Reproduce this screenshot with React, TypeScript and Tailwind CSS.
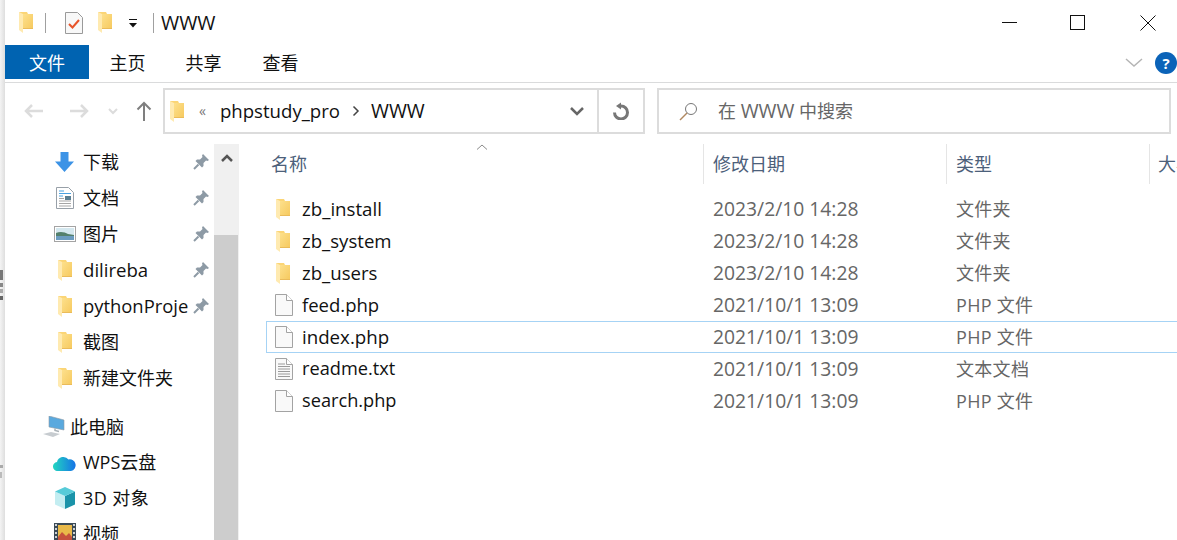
import React from "react";

const FONT = "font-['Open_Sans','Noto_Sans_CJK_SC',sans-serif]";

function Folder({ className = "" }: { className?: string }) {
  return (
    <svg width="14" height="21" viewBox="0 0 14 21" className={className}>
      <defs>
        <linearGradient id="fbody" x1="0" y1="0" x2="1" y2="1">
          <stop offset="0" stopColor="#fde08c" />
          <stop offset="1" stopColor="#f6c95e" />
        </linearGradient>
      </defs>
      <path d="M0 0h8l1 2h5v15H4z" fill="#fbd576" />
      <path d="M4 2h10v15H4z" fill="url(#fbody)" />
      <path d="M0 0l4 2v19L0 18z" fill="#ffeab0" />
      <path d="M4 16.500h10" stroke="#eabb5a" strokeWidth="1" />
    </svg>
  );
}

function Pin() {
  return (
    <svg width="16" height="16" viewBox="0 0 16 16">
      <path d="M10 0l6 6-1.500 1-1.500-.5L10.500 9v3L9 13.500 2.500 7 4 5.500h3L9.500 3 9 1.500z" fill="#8d9aa5" />
      <path d="M5.500 10.500L1 15" stroke="#8d9aa5" strokeWidth="2" />
    </svg>
  );
}

function FileIcon({ lines = false }: { lines?: boolean }) {
  return (
    <svg width="18" height="22" viewBox="0 0 18 22">
      <path d="M.5.500h11l6 6v15H.5z" fill="#f9f9f9" stroke="#a3a3a3" />
      <path d="M11.500.500v6h6" fill="#fff" stroke="#a3a3a3" />
      {lines && (
        <path d="M3 6h7M3 8.500h12M3 11h12M3 13.500h12M3 16h12M3 18.500h12" stroke="#9a9a9a" strokeWidth="1" />
      )}
    </svg>
  );
}

function SideIcon({ kind }: { kind: string }) {
  if (kind === "download")
    return (
      <svg width="19" height="20" viewBox="0 0 19 20">
        <path d="M5.500 0h8v9.500H19L9.500 20 0 9.500h5.500z" fill="#3c93e6" />
      </svg>
    );
  if (kind === "doc")
    return (
      <svg width="18" height="22" viewBox="0 0 18 22">
        <path d="M.5.500h12l5 5v16H.5z" fill="#fff" stroke="#98a0a8" />
        <path d="M3 4h5M3 6.500h12M3 9h4" stroke="#4ba3e3" strokeWidth="1" />
        <rect x="9" y="9" width="6" height="4" fill="#5a7f93" />
        <path d="M3 11.500h5M3 14h12M3 16.500h12M3 19h12" stroke="#a5a5a5" strokeWidth="1" />
      </svg>
    );
  if (kind === "pic")
    return (
      <svg width="22" height="16" viewBox="0 0 22 16">
        <rect x=".5" y=".5" width="21" height="15" fill="#fff" stroke="#a4a4a4" />
        <rect x="2" y="2" width="18" height="12" fill="#d5e8ef" />
        <path d="M2 7c4-2 9-1 12 1l6 1v5H2z" fill="#54806c" />
        <path d="M2 10h18v4H2z" fill="#6b9cc0" />
      </svg>
    );
  if (kind === "pc")
    return (
      <svg width="24" height="22" viewBox="0 0 24 22">
        <path d="M7 0l15 4v10L7 11z" fill="#5aa9de" stroke="#8d9aa5" strokeWidth=".6" />
        <path d="M13 12.500v2l4 1" stroke="#a9b1b7" strokeWidth="1.500" fill="none" />
        <path d="M1 18l8-2 9 2-7 3z" fill="#c7ccd0" />
      </svg>
    );
  if (kind === "cloud")
    return (
      <svg width="23" height="17" viewBox="0 0 23 17">
        <defs>
          <linearGradient id="cg" x1="0" y1="0" x2="1" y2="0">
            <stop offset="0" stopColor="#22d6c0" />
            <stop offset="1" stopColor="#1673e6" />
          </linearGradient>
        </defs>
        <path d="M5 17a4.500 4.500 0 0 1-1-9A6.500 6.500 0 0 1 15.500 5.500 5.700 5.700 0 0 1 18 17z" fill="url(#cg)" />
      </svg>
    );
  if (kind === "3d")
    return (
      <svg width="22" height="22" viewBox="0 0 22 22">
        <path d="M11 9l10-4.500v13L11 22z" fill="#1a93a9" />
        <path d="M11 9L1 4.500v13L11 22z" fill="#c3edf1" />
        <path d="M11 0l10 4.500L11 9 1 4.500z" fill="#56cbd8" />
      </svg>
    );
  return (
    <svg width="22" height="22" viewBox="0 0 22 22">
      <rect width="22" height="22" fill="#3b4a56" />
      <rect x="4" y="2" width="14" height="18" fill="#e9b949" />
      <path d="M4 14l4-5 4 4 3-3 3 4v6H4z" fill="#c6503d" />
      <path d="M1 2h2M1 6h2M1 10h2M1 14h2M1 18h2M19 2h2M19 6h2M19 10h2M19 14h2M19 18h2" stroke="#fff" strokeWidth="1.500" />
    </svg>
  );
}

function QuickItem({ icon, label, pin, labelClass = "" }: { icon: React.ReactNode; label: string; pin?: boolean; labelClass?: string }) {
  return (
    <div className="flex h-9 items-center pl-[45px]">
      <div className="flex w-[33px] shrink-0 items-center justify-center pr-[4px]">{icon}</div>
      <span className={`w-[110px] shrink-0 overflow-hidden whitespace-nowrap ${labelClass}`}>{label}</span>
      {pin && <Pin />}
    </div>
  );
}

const files = [
  { name: "zb_install", date: "2023/2/10 14:28", type: "文件夹", icon: "folder", size: "text-[18.7px]" },
  { name: "zb_system", date: "2023/2/10 14:28", type: "文件夹", icon: "folder", size: "text-[18.6px]" },
  { name: "zb_users", date: "2023/2/10 14:28", type: "文件夹", icon: "folder", size: "text-[18.6px]" },
  { name: "feed.php", date: "2021/10/1 13:09", type: "PHP 文件", icon: "file", size: "text-[18.5px]" },
  { name: "index.php", date: "2021/10/1 13:09", type: "PHP 文件", icon: "file", selected: true, size: "text-[18.7px]" },
  { name: "readme.txt", date: "2021/10/1 13:09", type: "文本文档", icon: "text", size: "text-[18.2px]" },
  { name: "search.php", date: "2021/10/1 13:09", type: "PHP 文件", icon: "file", size: "text-[18.2px]" },
];

export default function App() {
  return (
    <div className={`${FONT} flex h-[540px] w-[1177px] overflow-hidden bg-white text-[18px] text-[#111]`}>
      <div className="relative w-[5px] shrink-0 bg-linear-to-r from-[#f4f4f4] to-[#dedede]">
        <div className="absolute left-0 top-[270px] h-[10px] w-[3px] bg-[#777]" />
        <div className="absolute left-0 top-[283px] h-[4px] w-[3px] bg-[#888]" />
        <div className="absolute left-0 top-[289px] h-[4px] w-[3px] bg-[#aaa]" />
        <div className="absolute left-0 top-[296px] h-[4px] w-[3px] bg-[#666]" />
        <div className="absolute left-0 top-[465px] h-[3px] w-[3px] bg-[#aaa]" />
        <div className="absolute left-0 top-[472px] h-[6px] w-[2px] bg-[#bbb]" />
      </div>
      <div className="flex min-w-0 flex-1 flex-col">
        {/* title bar */}
        <div className="flex h-[45px] shrink-0 items-center">
          <Folder className="ml-[14px]" />
          <div className="ml-[12px] h-[20px] w-px bg-[#a0a0a0]" />
          <svg width="18" height="22" viewBox="0 0 18 22" className="ml-[19px]">
            <path d="M.5.500h12l5 5v16H.5z" fill="#f8f8f8" stroke="#9a9a9a" />
            <path d="M4 12l3.500 3.500L14 8" stroke="#e8542a" strokeWidth="2" fill="none" />
          </svg>
          <Folder className="ml-[15px]" />
          <svg width="10" height="10" viewBox="0 0 10 10" className="ml-[16px] mt-[2px]">
            <path d="M1 .5h8" stroke="#111" />
            <path d="M1 4h8L5 8.500z" fill="#111" />
          </svg>
          <div className="ml-[15px] h-[20px] w-px bg-[#a0a0a0]" />
          <span className="ml-[7px] text-[19.7px]">WWW</span>
          <div className="ml-auto flex items-center">
            <div className="mr-[53px] h-px w-[15px] bg-[#111]" />
            <div className="mr-[55px] h-[15px] w-[15px] border border-[#111]" />
            <svg width="16" height="16" viewBox="0 0 16 16" className="mr-[21px]">
              <path d="M.5.500l15 15M15.500.500l-15 15" stroke="#111" />
            </svg>
          </div>
        </div>
        {/* ribbon tabs */}
        <div className="flex h-[38px] shrink-0 items-start border-b border-[#dadbdc]">
          <div className="flex h-[34px] w-[84px] items-center justify-center bg-[#0063b1] pt-[2px] text-white">文件</div>
          <div className="flex h-[34px] w-[77px] items-center justify-center pt-[2px]">主页</div>
          <div className="flex h-[34px] w-[75px] items-center justify-center pt-[2px]">共享</div>
          <div className="flex h-[34px] w-[79px] items-center justify-center pt-[2px]">查看</div>
          <div className="ml-auto flex h-[34px] items-center">
            <svg width="18" height="10" viewBox="0 0 18 10" className="mr-[12px] mt-[2px]">
              <path d="M1 1l8 7 8-7" stroke="#b5b5b5" strokeWidth="1.500" fill="none" />
            </svg>
            <div className="mt-[2px] flex h-[22px] w-[22px] items-center justify-center rounded-full bg-[#0b63b8] text-[15px] font-bold text-white">?</div>
          </div>
        </div>
        {/* address bar */}
        <div className="flex h-[58px] shrink-0 items-start pt-[5px]">
          <div className="flex h-[46px] w-[158px] shrink-0 items-center">
            <svg width="20" height="16" viewBox="0 0 20 16" className="ml-[19px]">
              <path d="M19 8H2M8 2L2 8l6 6" stroke="#dcdcdc" strokeWidth="2.500" fill="none" />
            </svg>
            <svg width="20" height="16" viewBox="0 0 20 16" className="ml-[25px]">
              <path d="M1 8h17M12 2l6 6-6 6" stroke="#dcdcdc" strokeWidth="2.500" fill="none" />
            </svg>
            <svg width="10" height="7" viewBox="0 0 10 7" className="ml-[19px]">
              <path d="M1 1l4 4 4-4" stroke="#dcdcdc" strokeWidth="2" fill="none" />
            </svg>
            <svg width="16" height="20" viewBox="0 0 16 20" className="ml-[18px]">
              <path d="M8 20V2M1.500 8.500L8 2l6.500 6.500" stroke="#7f7f7f" strokeWidth="2" fill="none" />
            </svg>
          </div>
          <div className="flex h-[46px] w-[482px] shrink-0 items-center border-2 border-[#dcdcdc]">
            <Folder className="ml-[5px]" />
            <span className="ml-[15px] text-[14px] leading-none text-[#777]">«</span>
            <span className="ml-[14px] text-[18.6px]">phpstudy_pro</span>
            <svg width="8" height="12" viewBox="0 0 8 12" className="ml-[12px] mr-[11px]">
              <path d="M1.500 1.500L6 6l-4.500 4.500" stroke="#444" strokeWidth="1.500" fill="none" />
            </svg>
            <span className="text-[19.4px]">WWW</span>
            <svg width="14" height="9" viewBox="0 0 14 9" className="ml-auto mr-[13px]">
              <path d="M1 1l6 6 6-6" stroke="#666" strokeWidth="2.500" fill="none" />
            </svg>
            <div className="flex h-full w-[46px] items-center justify-center border-l-2 border-[#dcdcdc]">
              <svg width="18" height="18" viewBox="0 0 18 18">
                <path d="M2.500 10.500A6.500 6.500 0 1 0 9 4h-1" stroke="#777" strokeWidth="3" fill="none" />
                <path d="M9 .5L4 4l5 3.500z" fill="#777" />
              </svg>
            </div>
          </div>
          <div className="ml-[12px] flex h-[46px] w-[514px] shrink-0 items-center border-2 border-[#dcdcdc] pl-[20px] text-[#666]">
            <svg width="19" height="19" viewBox="0 0 19 19">
              <circle cx="12" cy="7" r="5.500" stroke="#777" fill="none" />
              <path d="M8 11l-7 7" stroke="#b08860" strokeWidth="1.500" />
            </svg>
            <span className="ml-[20px]">
              在 <span className="text-[19.4px]">WWW</span> 中搜索
            </span>
          </div>
        </div>
        {/* body */}
        <div className="flex min-h-0 flex-1">
          <div className="w-[209px] shrink-0 overflow-hidden pt-[3px]">
            <QuickItem icon={<SideIcon kind="download" />} label="下载" pin />
            <QuickItem icon={<SideIcon kind="doc" />} label="文档" pin />
            <QuickItem icon={<SideIcon kind="pic" />} label="图片" pin />
            <QuickItem icon={<Folder />} label="dilireba" pin labelClass="text-[18.6px]" />
            <QuickItem icon={<Folder />} label="pythonProje" pin labelClass="text-[18.4px]" />
            <QuickItem icon={<Folder />} label="截图" />
            <QuickItem icon={<Folder />} label="新建文件夹" />
            <div className="flex h-[48px] items-end pl-[37px]">
              <div className="flex h-[34px] items-center">
                <SideIcon kind="pc" />
                <span className="ml-[4px]">此电脑</span>
              </div>
            </div>
            <QuickItem icon={<SideIcon kind="cloud" />} label="WPS云盘" />
            <QuickItem icon={<SideIcon kind="3d" />} label="3D 对象" labelClass="tracking-[0.4px]" />
            <QuickItem icon={<SideIcon kind="video" />} label="视频" />
          </div>
          {/* scrollbar */}
          <div className="mt-[3px] flex w-[25px] shrink-0 flex-col bg-[#f0f0f0]">
            <div className="flex h-[27px] shrink-0 items-center justify-center">
              <svg width="12" height="8" viewBox="0 0 12 8">
                <path d="M1 7l5-5 5 5" stroke="#555" strokeWidth="2.500" fill="none" />
              </svg>
            </div>
            <div className="mt-[64px] w-[24px] flex-1 bg-[#cdcdcd]" />
          </div>
          {/* file list */}
          <div className="min-w-0 flex-1 overflow-hidden pl-[28px]">
            <div className="relative flex h-[52px] items-start pt-[3px] text-[#4c607a]">
              <svg width="12" height="6" viewBox="0 0 12 6" className="absolute left-[209px] top-[3px]">
                <path d="M1 5.500L6 1l5 4.500" stroke="#8a8a8a" fill="none" />
              </svg>
              <div className="flex h-[40px] w-[437px] shrink-0 items-center border-r border-[#e5e5e5] pl-[4px]">名称</div>
              <div className="flex h-[40px] w-[243px] shrink-0 items-center border-r border-[#e5e5e5] pl-[9px]">修改日期</div>
              <div className="flex h-[40px] w-[203px] shrink-0 items-center border-r border-[#e5e5e5] pl-[9px]">类型</div>
              <div className="flex h-[40px] shrink-0 items-center whitespace-nowrap pl-[8px]">大小</div>
            </div>
            {files.map((f) => (
              <div
                key={f.name}
                className={`flex h-[32px] items-center ${
                  f.selected ? "-ml-px w-[911px] border border-r-0 border-[#a6d3f5]" : "w-[910px]"
                }`}
              >
                <div className="flex w-[35px] shrink-0 justify-start pl-[8px]">
                  {f.icon === "folder" ? <Folder className="ml-px" /> : <FileIcon lines={f.icon === "text"} />}
                </div>
                <span className={`w-[411px] shrink-0 ${f.size}`}>{f.name}</span>
                <span className="w-[243px] shrink-0 text-[19.3px] text-[#666]">{f.date}</span>
                <span className="shrink-0 tracking-[0.3px] text-[#666]">{f.type}</span>
              </div>
            ))}
          </div>
        </div>
      </div>
    </div>
  );
}
